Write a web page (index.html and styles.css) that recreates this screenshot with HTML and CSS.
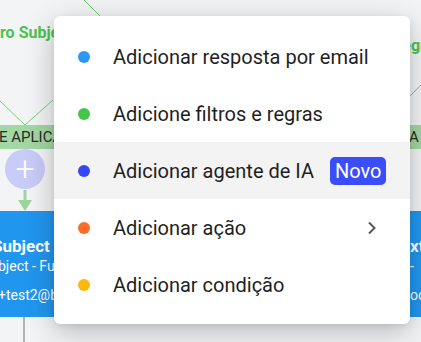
FILE: index.html
```html
<!DOCTYPE html>
<html>
<head>
    <title>Fluxo - Menu</title>
    <link rel="stylesheet" href="styles.css">
</head>
<body>
    <div class="canvas">
        <svg class="wires" width="421" height="342" viewBox="0 0 421 342">
            <line x1="84" y1="0" x2="160" y2="76" />
            <line x1="0" y1="101" x2="25" y2="125" />
            <line x1="53" y1="100" x2="25" y2="125" />
            <line x1="421" y1="85" x2="404" y2="102" />
            <line class="arrow" x1="25" y1="190" x2="25" y2="204" />
            <polygon class="arrow-head" points="18,200 32,200 25,211" />
            <line class="trunk" x1="24" y1="317" x2="24" y2="342" />
        </svg>

        <div class="node-title left-title">ro Subject</div>
        <div class="node-title right-title">Regra</div>

        <div class="rule-bar left-bar">E APLICAR</div>
        <div class="rule-bar right-bar">A</div>

        <div class="add-btn">+</div>

        <div class="step left-step">
            <div class="step-name">Subject</div>
            <div class="step-sub">bject - Fu</div>
            <div class="step-mail">+test2@b</div>
        </div>
        <div class="step right-step">
            <div class="step-name">xt</div>
            <div class="step-sub">-</div>
            <div class="step-mail">oo</div>
        </div>
    </div>

    <div class="menu">
        <div class="item"><span class="dot blue"></span>Adicionar resposta por email</div>
        <div class="item"><span class="dot green"></span>Adicione filtros e regras</div>
        <div class="item active"><span class="dot indigo"></span>Adicionar agente de IA <span class="badge">Novo</span></div>
        <div class="item"><span class="dot orange"></span>Adicionar ação
            <svg class="chevron" width="10" height="14" viewBox="0 0 10 14"><polyline points="2,1.5 7.5,7 2,12.5" /></svg>
        </div>
        <div class="item"><span class="dot yellow"></span>Adicionar condição</div>
    </div>
</body>
</html>
```

FILE: styles.css
```css
body { margin: 0; width: 421px; height: 342px; overflow: hidden; position: relative; background: #f3f4f5; font-family: Roboto, "Noto Sans", sans-serif; }

.canvas { position: absolute; inset: 0; overflow: hidden; }
.wires { position: absolute; left: 0; top: 0; }
.wires line { stroke: #6fd36f; stroke-width: 1; }
.wires .arrow { stroke: #9fd49f; stroke-width: 3; }
.wires .arrow-head { fill: #9fd49f; }
.wires .trunk { stroke: #b3b3b3; stroke-width: 2; }

.node-title { position: absolute; color: #4cc34c; font-weight: bold; font-size: 16px; white-space: nowrap; }
.left-title { left: 0; top: 23px; }
.right-title { left: 392px; top: 36px; }

.rule-bar { position: absolute; top: 125px; height: 24px; line-height: 24px; background: #a3d7a3; color: #2a2a2a; font-size: 15px; white-space: nowrap; }
.left-bar { left: -1px; width: 80px; }
.right-bar { left: 405px; width: 30px; padding-left: 4px; border-radius: 4px 0 0 4px; }

.add-btn { position: absolute; left: 5px; top: 149px; width: 40px; height: 40px; border-radius: 50%; background: #c9cbf8; color: #fff; font-size: 34px; font-weight: 300; line-height: 38px; text-align: center; }

.step { position: absolute; top: 211px; height: 106px; background: #2196ef; color: #fff; white-space: nowrap; }
.left-step { left: -2px; width: 100px; }
.left-step .step-name { text-indent: -6px; }
.right-step { left: 405px; width: 40px; padding-left: 5px; }
.step-name { font-weight: bold; font-size: 17px; margin-top: 25px; }
.step-sub { font-size: 14px; margin-top: 2px; }
.step-mail { font-size: 14px; margin-top: 13px; }

.menu { position: absolute; left: 54px; top: 16px; width: 356px; height: 308px; box-sizing: border-box; padding: 12px 0 11px; background: #fff; border-radius: 6px; box-shadow: 0 8px 30px rgba(0,0,0,0.24), 0 2px 6px rgba(0,0,0,0.08); }
.item { display: flex; align-items: center; height: 57px; padding-left: 24px; font-size: 20px; color: #1f1f1f; }
.item.active { background: #f3f3f3; }
.dot { width: 12px; height: 12px; border-radius: 50%; margin-right: 23px; flex: none; }
.blue { background: #2c97f4; }
.green { background: #45c54c; }
.indigo { background: #3548f8; }
.orange { background: #ff6c2a; }
.yellow { background: #ffb808; }
.badge { margin-left: 16px; background: #3b4cfb; color: #fff; border-radius: 5px; height: 28px; line-height: 28px; padding: 0 5px; }
.chevron { margin-left: auto; margin-right: 33px; }
.chevron polyline { fill: none; stroke: #555a60; stroke-width: 2; }
```
